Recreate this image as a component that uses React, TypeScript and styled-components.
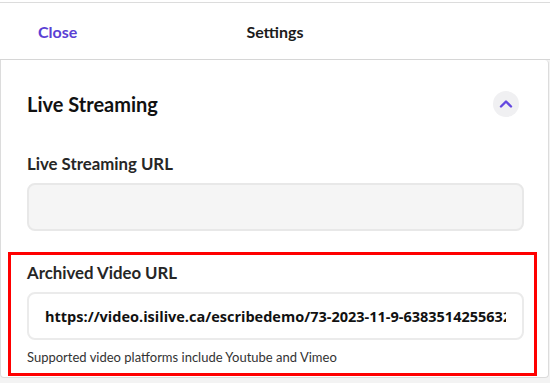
import React from "react";
import styled, { createGlobalStyle } from "styled-components";

const Global = createGlobalStyle`
  html, body { margin: 0; padding: 0; }
  body {
    background: #f3f3f3;
    font-family: Lato, "Open Sans", sans-serif;
    color: #1d1d1d;
  }
  * { box-sizing: border-box; }
`;

const Page = styled.div`
  width: 550px;
  height: 383px;
  overflow: hidden;
  background: #f3f3f3;
  display: flex;
  flex-direction: column;
`;

const Header = styled.header`
  margin-top: 2px;
  height: 58px;
  background: #fff;
  border-top: 1px solid #dcdcdc;
  border-bottom: 1px solid #d6d6d6;
  box-shadow: 0 -2px 0 #fff;
  display: grid;
  grid-template-columns: 1fr auto 1fr;
  align-items: center;
  padding: 0 38px;
`;

const CloseButton = styled.button`
  justify-self: start;
  background: none;
  border: none;
  padding: 0;
  font-family: Lato, sans-serif;
  font-size: 16px;
  font-weight: 700;
  color: #5a40d4;
  cursor: pointer;
`;

const Title = styled.h1`
  margin: 0;
  font-size: 16px;
  font-weight: 700;
  color: #1b1b1b;
`;

const Card = styled.section`
  margin-right: 1px;
  background: #fff;
  border: 1px solid #dcdcdc;
  border-top: none;
  border-radius: 0 4px 4px 4px;
  padding: 31px 24px 1px 26px;
  display: flex;
  flex-direction: column;
`;

const SectionHead = styled.div`
  display: flex;
  align-items: center;
  justify-content: space-between;
  height: 26px;
  padding-right: 5px;
`;

const SectionTitle = styled.h2`
  margin: 0;
  font-size: 20px;
  line-height: 24px;
  font-weight: 700;
  color: #111;
`;

const ToggleButton = styled.button`
  width: 26px;
  height: 26px;
  border-radius: 50%;
  border: none;
  background: #f0f0f2;
  display: flex;
  align-items: center;
  justify-content: center;
  padding: 0;
`;

const Field = styled.div<{ $outlined?: boolean }>`
  display: flex;
  flex-direction: column;
  gap: 9px;
  margin-top: ${(p) => (p.$outlined ? "21px" : "37px")};
  ${(p) =>
    p.$outlined
      ? `
    margin-left: -19px;
    margin-right: -13px;
    border: 3px solid #ff0000;
    padding: 8px 10px 8px 16px;
  `
      : ""}
`;

const Label = styled.label`
  font-size: 16.8px;
  line-height: 20px;
  font-weight: 700;
  color: #262626;
`;

const Input = styled.input<{ $filled?: boolean }>`
  width: 497px;
  height: 48px;
  border-radius: 8px;
  border: 2px solid ${(p) => (p.$filled ? "#ebebeb" : "#e8e8e8")};
  background: ${(p) => (p.$filled ? "#fff" : "#f5f5f5")};
  padding: 0 16px;
  font-family: "Open Sans", sans-serif;
  font-size: 14.5px;
  font-weight: 700;
  color: #111;
  outline: none;
`;

const Helper = styled.p`
  margin: 0;
  font-size: 13px;
  line-height: 16px;
  color: #333;
`;

function ChevronUp() {
  return (
    <svg width="14" height="10" viewBox="0 0 14 10" fill="none">
      <polyline
        points="2,7.5 7,2.5 12,7.5"
        stroke="#6448e0"
        strokeWidth="2.4"
        strokeLinecap="round"
        strokeLinejoin="round"
      />
    </svg>
  );
}

export default function App() {
  return (
    <>
      <Global />
      <Page>
        <Header>
          <CloseButton>Close</CloseButton>
          <Title>Settings</Title>
          <span />
        </Header>
        <Card>
          <SectionHead>
            <SectionTitle>Live Streaming</SectionTitle>
            <ToggleButton aria-label="Collapse">
              <ChevronUp />
            </ToggleButton>
          </SectionHead>
          <Field>
            <Label>Live Streaming URL</Label>
            <Input readOnly value="" />
          </Field>
          <Field $outlined>
            <Label>Archived Video URL</Label>
            <Input
              $filled
              readOnly
              value="https://video.isilive.ca/escribedemo/73-2023-11-9-638351425563244196.mp4"
            />
            <Helper>Supported video platforms include Youtube and Vimeo</Helper>
          </Field>
        </Card>
      </Page>
    </>
  );
}
